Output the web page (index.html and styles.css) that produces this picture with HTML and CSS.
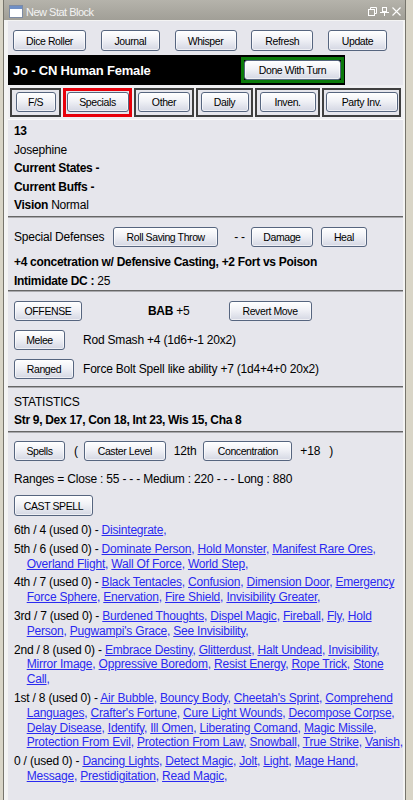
FILE: index.html
```html
<!DOCTYPE html>
<html>
<head>
<meta charset="utf-8">
<title>New Stat Block</title>
<link rel="stylesheet" href="styles.css">
</head>
<body>
<div class="window">
  <div class="titlebar">
    <svg class="app-icon" width="14" height="13" viewBox="0 0 14 13"><rect x="0.5" y="0.5" width="13" height="12" fill="#fff" stroke="#7d8ba3"/><rect x="1" y="1" width="12" height="3" fill="#6f8fc6"/></svg>
    <span class="title">New Stat Block</span>
    <div class="controls">
      <svg width="9" height="9" viewBox="0 0 9 9"><rect x="0.5" y="2.5" width="6" height="6" fill="none" stroke="#fff"/><path d="M2.5 2.5V0.5H8.5V6.5H6.5" fill="none" stroke="#fff"/></svg>
      <svg width="9" height="9" viewBox="0 0 9 9"><rect x="2.5" y="0.5" width="4" height="4" fill="none" stroke="#fff"/><path d="M0 5.5H9M4.5 5.5V9" fill="none" stroke="#fff"/></svg>
      <svg width="9" height="9" viewBox="0 0 9 9"><path d="M0.5 0.5L8.5 8.5M8.5 0.5L0.5 8.5" fill="none" stroke="#fff" stroke-width="1.1"/></svg>
    </div>
  </div>
  <div class="frame">
    <div class="panel">
      <div class="toolbar">
        <button class="btn b-dice">Dice Roller</button>
        <button class="btn b-journal">Journal</button>
        <button class="btn b-whisper">Whisper</button>
        <button class="btn b-refresh">Refresh</button>
        <button class="btn b-update">Update</button>
      </div>
      <div class="namebar">
        <div class="charname">Jo - CN Human Female</div>
        <div class="done"><button class="btn b-done">Done With Turn</button></div>
      </div>
      <div class="tabs">
        <div class="tab t1"><button class="btn b-fs">F/S</button></div>
        <div class="tab t2 active"><button class="btn b-spec">Specials</button></div>
        <div class="tab t3"><button class="btn b-other">Other</button></div>
        <div class="tab t4"><button class="btn b-daily">Daily</button></div>
        <div class="tab t5"><button class="btn b-inven">Inven.</button></div>
        <div class="tab t6"><button class="btn b-party">Party Inv.</button></div>
      </div>

      <div class="sec info">
        <div><b>13</b></div>
        <div>Josephine</div>
        <div><b>Current States -</b></div>
        <div><b>Current Buffs -</b></div>
        <div><b>Vision</b> Normal</div>
      </div>
      <div class="sep"></div>

      <div class="sec defenses">
        <div class="row">
          <span>Special Defenses</span>
          <button class="btn b-save m9">Roll Saving Throw</button>
          <span class="m16">- -</span>
          <button class="btn b-damage m6">Damage</button>
          <button class="btn b-heal m8">Heal</button>
        </div>
        <div class="lines">
          <div><b>+4 concetration w/ Defensive Casting, +2 Fort vs Poison</b></div>
          <div><b>Intimidate DC :</b> 25</div>
        </div>
      </div>
      <div class="sep"></div>

      <div class="sec offense">
        <div class="row">
          <button class="btn b-offense">OFFENSE</button>
          <span class="bab"><b>BAB</b> +5</span>
          <button class="btn b-revert">Revert Move</button>
        </div>
        <div class="attacks">
          <button class="btn b-melee">Melee</button>
          <span>Rod Smash +4 (1d6+-1 20x2)</span>
          <button class="btn b-ranged">Ranged</button>
          <span>Force Bolt Spell like ability +7 (1d4+4+0 20x2)</span>
        </div>
      </div>
      <div class="sep"></div>

      <div class="sec stats">
        <div>STATISTICS</div>
        <div><b>Str 9, Dex 17, Con 18, Int 23, Wis 15, Cha 8</b></div>
      </div>
      <div class="sep"></div>

      <div class="sec spells">
        <div class="row">
          <button class="btn b-spells">Spells</button>
          <span class="m9">(</span>
          <button class="btn b-cl m6">Caster Level</button>
          <span class="m8">12th</span>
          <button class="btn b-conc m7">Concentration</button>
          <span class="m8">+18</span>
          <span class="m9">)</span>
        </div>
        <div class="ranges">Ranges = Close : 55 - - - Medium : 220 - - - Long : 880</div>
        <button class="btn b-cast">CAST SPELL</button>
        <div class="spell-list">
          <p class="lvl">6th / 4 (used 0) - <a href="#">Disintegrate</a><span class="c">,</span></p>
          <p class="lvl">5th / 6 (used 0) - <a href="#">Dominate Person</a><span class="c">,</span> <a href="#">Hold Monster</a><span class="c">,</span> <a href="#">Manifest Rare Ores</a><span class="c">,</span><br><a href="#">Overland Flight</a><span class="c">,</span> <a href="#">Wall Of Force</a><span class="c">,</span> <a href="#">World Step</a><span class="c">,</span></p>
          <p class="lvl">4th / 7 (used 0) - <a href="#">Black Tentacles</a><span class="c">,</span> <a href="#">Confusion</a><span class="c">,</span> <a href="#">Dimension Door</a><span class="c">,</span> <a href="#">Emergency</a><br><a href="#">Force Sphere</a><span class="c">,</span> <a href="#">Enervation</a><span class="c">,</span> <a href="#">Fire Shield</a><span class="c">,</span> <a href="#">Invisibility Greater</a><span class="c">,</span></p>
          <p class="lvl">3rd / 7 (used 0) - <a href="#">Burdened Thoughts</a><span class="c">,</span> <a href="#">Dispel Magic</a><span class="c">,</span> <a href="#">Fireball</a><span class="c">,</span> <a href="#">Fly</a><span class="c">,</span> <a href="#">Hold</a><br><a href="#">Person</a><span class="c">,</span> <a href="#">Pugwampi's Grace</a><span class="c">,</span> <a href="#">See Invisibility</a><span class="c">,</span></p>
          <p class="lvl">2nd / 8 (used 0) - <a href="#">Embrace Destiny</a><span class="c">,</span> <a href="#">Glitterdust</a><span class="c">,</span> <a href="#">Halt Undead</a><span class="c">,</span> <a href="#">Invisibility</a><span class="c">,</span><br><a href="#">Mirror Image</a><span class="c">,</span> <a href="#">Oppressive Boredom</a><span class="c">,</span> <a href="#">Resist Energy</a><span class="c">,</span> <a href="#">Rope Trick</a><span class="c">,</span> <a href="#">Stone</a><br><a href="#">Call</a><span class="c">,</span></p>
          <p class="lvl">1st / 8 (used 0) - <a href="#">Air Bubble</a><span class="c">,</span> <a href="#">Bouncy Body</a><span class="c">,</span> <a href="#">Cheetah's Sprint</a><span class="c">,</span> <a href="#">Comprehend</a><br><a href="#">Languages</a><span class="c">,</span> <a href="#">Crafter's Fortune</a><span class="c">,</span> <a href="#">Cure Light Wounds</a><span class="c">,</span> <a href="#">Decompose Corpse</a><span class="c">,</span><br><a href="#">Delay Disease</a><span class="c">,</span> <a href="#">Identify</a><span class="c">,</span> <a href="#">Ill Omen</a><span class="c">,</span> <a href="#">Liberating Comand</a><span class="c">,</span> <a href="#">Magic Missile</a><span class="c">,</span><br><a href="#">Protection From Evil</a><span class="c">,</span> <a href="#">Protection From Law</a><span class="c">,</span> <a href="#">Snowball</a><span class="c">,</span> <a href="#">True Strike</a><span class="c">,</span> <a href="#">Vanish</a><span class="c">,</span></p>
          <p class="lvl">0 / (used 0) - <a href="#">Dancing Lights</a><span class="c">,</span> <a href="#">Detect Magic</a><span class="c">,</span> <a href="#">Jolt</a><span class="c">,</span> <a href="#">Light</a><span class="c">,</span> <a href="#">Mage Hand</a><span class="c">,</span><br><a href="#">Message</a><span class="c">,</span> <a href="#">Prestidigitation</a><span class="c">,</span> <a href="#">Read Magic</a><span class="c">,</span></p>
        </div>
      </div>
    </div>
  </div>
</div>
</body>
</html>
```

FILE: styles.css
```css
* { box-sizing: border-box; }

body {
  margin: 0;
  height: 800px;
  overflow: hidden;
  background: #d9d5c7;
  font-family: "Liberation Sans", Arial, sans-serif;
  font-size: 12px;
  letter-spacing: -0.2px;
  color: #000;
}

b { letter-spacing: -0.3px; }

.window {
  margin: 0 7px 0 3px;
  height: 800px;
  border-left: 1px solid #77756c;
  border-right: 1px solid #77756c;
  background: #f4f4f4;
  display: flex;
  flex-direction: column;
}

.titlebar {
  height: 20px;
  padding: 3px 4px 0 5px;
  background: linear-gradient(#b5b3ab, #a19f97);
  display: flex;
  align-items: center;
  color: #f3f3f3;
}

.app-icon { flex: none; }

.title {
  margin-left: 3px;
  font-size: 11px;
  letter-spacing: -0.5px;
}

.controls {
  margin-left: auto;
  display: flex;
  gap: 3px;
}

.frame {
  flex: 1;
  padding: 1px 2px 0 4px;
}

.panel {
  height: 100%;
  background: #e6e6ec;
}

.btn {
  height: 20px;
  padding: 0;
  border: 1px solid #56657f;
  border-radius: 3px;
  background: linear-gradient(#ffffff 0%, #f0f1f6 45%, #d4d7e3 100%);
  box-shadow: inset 0 0 0 1px rgba(255, 255, 255, 0.6);
  font-family: "Liberation Sans", Arial, sans-serif;
  font-size: 10.5px;
  letter-spacing: -0.4px;
  color: #000;
  flex: none;
}

/* top toolbar */
.toolbar {
  display: flex;
  justify-content: space-between;
  padding: 9px 16px 4px 5px;
}
.toolbar .btn { height: 21px; }
.b-dice { width: 73px; }
.b-journal { width: 59px; }
.b-whisper { width: 62px; }
.b-refresh { width: 62px; }
.b-update { width: 59px; }

/* name bar */
.namebar {
  width: 337px;
  height: 30px;
  background: #000;
  display: flex;
  align-items: center;
}
.charname {
  flex: 1;
  padding-left: 5px;
  color: #fff;
  font-weight: bold;
  font-size: 13px;
  letter-spacing: -0.2px;
}
.done {
  width: 103px;
  height: 26px;
  margin-right: 1px;
  border: 3px solid #0b7a0b;
}
.b-done { width: 97px; height: 20px; }

/* tabs */
.tabs {
  display: flex;
  gap: 2px;
  height: 35px;
  padding: 3px 0 0 2px;
  background: #efeff2;
  border-bottom: 1px solid #fbfbfb;
}
.tab {
  height: 29px;
  padding-top: 2px;
  border: 2px solid #3f3f3f;
  display: flex;
  justify-content: center;
  align-items: flex-start;
  background: #e6e6ec;
}
.tab.active {
  border: 3px solid #e8000a;
  padding-top: 1px;
}
.t1 { width: 51px; }
.t2 { width: 69px; }
.t3 { width: 60px; }
.t4 { width: 57px; }
.t5 { width: 65px; }
.t6 { width: 79px; }
.b-fs { width: 40px; }
.b-spec { width: 62px; }
.b-other { width: 52px; }
.b-daily { width: 48px; }
.b-inven { width: 56px; }
.b-party { width: 72px; }

/* sections */
.sec { padding-left: 6px; padding-right: 4px; }

.sep {
  height: 2px;
  border-top: 1px solid #666;
  border-bottom: 1px solid #a9a9ad;
}

.info {
  padding-top: 2px;
  padding-bottom: 1.5px;
  line-height: 18.5px;
}

.row {
  display: flex;
  align-items: center;
  height: 20px;
}

.defenses { padding-top: 9px; }
.defenses .lines {
  margin-top: 6px;
  line-height: 18.5px;
}
.b-save { width: 105px; }
.b-damage { width: 62px; }
.b-heal { width: 46px; }
.m6 { margin-left: 6px; }
.m7 { margin-left: 7px; }
.m8 { margin-left: 8px; }
.m9 { margin-left: 9px; }
.m16 { margin-left: 16px; }

.offense { padding-top: 9px; padding-bottom: 7px; }
.b-offense { width: 68px; }
.bab { margin-left: 66px; }
.b-revert { width: 83px; margin-left: 39px; }

.attacks {
  display: grid;
  grid-template-columns: 60px 1fr;
  grid-auto-rows: 20px;
  column-gap: 9px;
  row-gap: 9px;
  margin-top: 9px;
  align-items: center;
}
.b-melee { width: 51px; }
.b-ranged { width: 60px; }

.stats {
  padding-top: 4.75px;
  padding-bottom: 1.25px;
  line-height: 18.5px;
}

.spells { padding-top: 8px; }
.b-spells { width: 51px; }
.b-cl { width: 82px; }
.b-conc { width: 89px; }

.ranges {
  margin-top: 8.75px;
  line-height: 18.5px;
}

.b-cast {
  display: block;
  width: 79px;
  height: 21px;
  margin-top: 6.75px;
}

.spell-list { margin-top: 7px; }

.lvl {
  margin: 0 0 4px;
  line-height: 14.8px;
  padding-left: 12.7px;
  text-indent: -12.7px;
  white-space: nowrap;
}

.lvl a {
  color: #2a2af0;
  text-decoration: underline;
}

.c { color: #2a2af0; }
```
